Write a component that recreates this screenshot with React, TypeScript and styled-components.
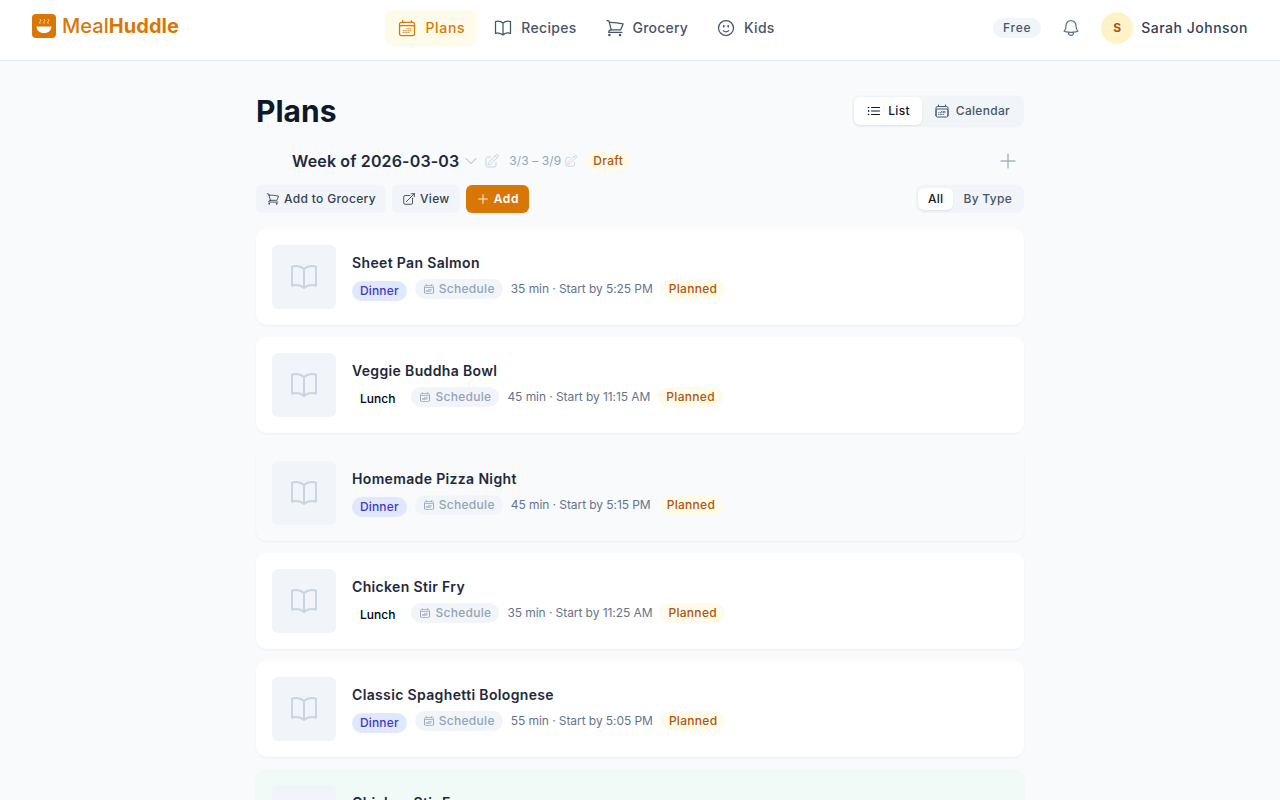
import React from "react";
import styled, { createGlobalStyle } from "styled-components";
import {
  HiOutlineArrowTopRightOnSquare,
  HiOutlineBell,
  HiOutlineBookOpen,
  HiOutlineCalendarDays,
  HiOutlineChevronDown,
  HiOutlineFaceSmile,
  HiOutlineListBullet,
  HiOutlinePencilSquare,
  HiOutlinePlus,
  HiOutlineShoppingCart,
} from "react-icons/hi2";

const GlobalStyle = createGlobalStyle`
  * { box-sizing: border-box; }
  html, body { margin: 0; padding: 0; background: #f8fafc; }
  body { font-family: Inter, "Liberation Sans", sans-serif; color: #0f172a; }
`;

const Header = styled.header`
  height: 61px;
  background: #fff;
  border-bottom: 1px solid #e2e8f0;
  padding: 0 32px;
  display: flex;
  justify-content: space-between;
  align-items: center;
`;
const Brand = styled.div`
  display: flex;
  align-items: center;
  gap: 6px;
  font-size: 20px;
  line-height: 28px;
  color: #d97706;
  font-weight: 500;
  letter-spacing: 0.05px;
  margin-top: -8px;
  b { font-weight: 700; }
`;
const Nav = styled.nav`
  display: flex;
  gap: 4px;
  margin-top: -4px;
`;
const NavItem = styled.a<{ $active?: boolean; $spacing: number }>`
  height: 36px;
  padding: 0 12px 2px;
  display: flex;
  align-items: center;
  gap: 8px;
  border-radius: 8px;
  font-size: 14px;
  font-weight: 500;
  letter-spacing: ${(p) => p.$spacing}px;
  color: ${(p) => (p.$active ? "#d97706" : "#475569")};
  background: ${(p) => (p.$active ? "#fffbeb" : "transparent")};
  svg { width: 20px; height: 20px; margin-bottom: -2px; }
`;
const Right = styled.div`
  display: flex;
  align-items: center;
  margin-top: -4px;
`;
const Free = styled.span`
  height: 20px;
  padding: 0 10px 2px;
  border-radius: 10px;
  background: #f1f5f9;
  color: #475569;
  font-size: 12px;
  font-weight: 500;
  letter-spacing: 0.75px;
  display: flex;
  align-items: center;
  margin-right: 20px;
`;
const Bell = styled(HiOutlineBell)`
  width: 20px;
  height: 20px;
  color: #64748b;
  margin-right: 20px;
`;
const Avatar = styled.span`
  width: 32px;
  height: 32px;
  padding-bottom: 2px;
  border-radius: 50%;
  background: #fef3c7;
  color: #b45309;
  font-size: 12px;
  font-weight: 700;
  display: flex;
  align-items: center;
  justify-content: center;
  margin-right: 8px;
`;
const UserName = styled.span`
  font-size: 14px;
  font-weight: 500;
  letter-spacing: 0.5px;
  padding-bottom: 2px;
  color: #334155;
`;

const Main = styled.main`
  width: 768px;
  margin: 0 auto;
  padding-top: 30px;
`;
const TitleRow = styled.div`
  display: flex;
  align-items: center;
  justify-content: space-between;
  height: 40px;
`;
const Title = styled.h1`
  margin: 0;
  font-size: 30px;
  line-height: 36px;
  font-weight: 700;
  color: #0f172a;
`;
const Segment = styled.div`
  display: flex;
  padding: 2px;
  background: #f1f5f9;
  border-radius: 8px;
`;
const SegmentButton = styled.button<{ $active?: boolean; $small?: boolean }>`
  border: 0;
  font-family: inherit;
  height: ${(p) => (p.$small ? "22px" : "28px")};
  padding: 0 ${(p) => (p.$small ? "10px" : "12px")} 2px;
  display: flex;
  align-items: center;
  gap: 6px;
  font-size: 12px;
  font-weight: 500;
  letter-spacing: 0.3px;
  border-radius: 6px;
  color: ${(p) => (p.$active ? "#0f172a" : "#475569")};
  background: ${(p) => (p.$active ? "#fff" : "transparent")};
  box-shadow: ${(p) => (p.$active ? "0 1px 2px rgba(15,23,42,.08)" : "none")};
  svg { width: 16px; height: 16px; margin-bottom: -2px; }
`;
const WeekRow = styled.div`
  display: flex;
  align-items: center;
  height: 28px;
  margin-top: 16px;
  padding-left: 36px;
`;
const WeekName = styled.span`
  font-size: 16px;
  font-weight: 600;
  letter-spacing: 0.15px;
  line-height: 28px;
  color: #1e293b;
`;
const Chevron = styled(HiOutlineChevronDown)`
  width: 16px;
  height: 16px;
  color: #a5b1c4;
  margin-left: 4px;
`;
const PencilLg = styled(HiOutlinePencilSquare)`
  width: 16px;
  height: 16px;
  color: #cbd5e1;
  margin-left: 5px;
`;
const Dates = styled.span`
  font-size: 12px;
  color: #94a3b8;
  letter-spacing: 0.1px;
  padding-bottom: 2px;
  margin-left: 9px;
`;
const PencilSm = styled(HiOutlinePencilSquare)`
  width: 14px;
  height: 14px;
  color: #cbd5e1;
  margin-left: 3px;
`;
const StatusPill = styled.span`
  height: 20px;
  padding: 0 8px 2px;
  border-radius: 10px;
  background: #fffbeb;
  color: #b45309;
  font-size: 12px;
  font-weight: 500;
  letter-spacing: 0.3px;
  display: inline-flex;
  align-items: center;
`;
const DraftPill = styled(StatusPill)`
  margin-left: 7px;
`;
const AddWeek = styled(HiOutlinePlus)`
  width: 22px;
  height: 22px;
  color: #a5b1c4;
  margin-left: auto;
  margin-right: 5px;
`;
const Toolbar = styled.div`
  display: flex;
  align-items: center;
  height: 28px;
  margin-top: 10px;
  gap: 6px;
`;
const ToolButton = styled.button<{ $primary?: boolean }>`
  border: 0;
  font-family: inherit;
  height: 28px;
  padding: 0 10px 2px;
  display: flex;
  align-items: center;
  gap: 4px;
  font-size: 12px;
  font-weight: ${(p) => (p.$primary ? 600 : 500)};
  letter-spacing: ${(p) => (p.$primary ? 0.6 : 0.34)}px;
  border-radius: 6px;
  color: ${(p) => (p.$primary ? "#fff" : "#334155")};
  background: ${(p) => (p.$primary ? "#d97706" : "#f1f5f9")};
  svg { width: 14px; height: 14px; margin-bottom: -2px; }
`;
const TypeSwitch = styled(Segment)`
  margin-left: auto;
  padding: 3px 2px;
  height: 28px;
  align-items: center;
`;
const CardList = styled.div`
  display: flex;
  flex-direction: column;
  gap: 12px;
  margin-top: 16px;
  padding-bottom: 24px;
`;
const Card = styled.article<{ $tone?: string }>`
  height: 96px;
  padding: 16px;
  display: flex;
  gap: 16px;
  border-radius: 10px;
  background: ${(p) => p.$tone || "#fff"};
  box-shadow: 0 1px 2px rgba(15, 23, 42, 0.05);
`;
const Thumb = styled.div`
  width: 64px;
  height: 64px;
  flex: none;
  border-radius: 6px;
  background: #f1f5f9;
  color: #cbd5e1;
  display: flex;
  align-items: center;
  justify-content: center;
  svg { width: 32px; height: 32px; }
`;
const CardBody = styled.div`
  display: flex;
  flex-direction: column;
  padding-top: 8px;
`;
const CardTitle = styled.div`
  font-size: 14px;
  line-height: 20px;
  font-weight: 600;
  letter-spacing: 0.35px;
  color: #1e293b;
`;
const Meta = styled.div`
  display: flex;
  align-items: center;
  gap: 8px;
  margin-top: 4px;
  height: 24px;
`;
const MealTag = styled.span<{ $dinner?: boolean }>`
  height: 20px;
  padding: 0 8px 2px;
  margin-top: 4px;
  border-radius: 10px;
  display: flex;
  align-items: center;
  font-size: 12px;
  font-weight: 500;
  letter-spacing: ${(p) => (p.$dinner ? 0.15 : 0)}px;
  color: ${(p) => (p.$dinner ? "#4338ca" : "#000")};
  background: ${(p) => (p.$dinner ? "#e0e7ff" : "transparent")};
`;
const ScheduleTag = styled.span`
  height: 20px;
  padding: 0 8px 2px;
  border-radius: 10px;
  display: flex;
  align-items: center;
  gap: 4px;
  background: #f1f5f9;
  color: #94a3b8;
  font-size: 12px;
  font-weight: 500;
  letter-spacing: 0.3px;
  svg { width: 12px; height: 12px; margin-bottom: -2px; }
`;
const Timing = styled.span`
  font-size: 12px;
  letter-spacing: -0.07px;
  padding-bottom: 2px;
  color: #64748b;
`;

const meals = [
  { name: "Sheet Pan Salmon", type: "Dinner", info: "35 min · Start by 5:25 PM" },
  { name: "Veggie Buddha Bowl", type: "Lunch", info: "45 min · Start by 11:15 AM" },
  { name: "Homemade Pizza Night", type: "Dinner", info: "45 min · Start by 5:15 PM", tone: "#f8fafc" },
  { name: "Chicken Stir Fry", type: "Lunch", info: "35 min · Start by 11:25 AM" },
  { name: "Classic Spaghetti Bolognese", type: "Dinner", info: "55 min · Start by 5:05 PM" },
  { name: "Chicken Stir Fry", type: "Dinner", info: "35 min · Start by 5:25 PM", tone: "#f0fbf7" },
];

function BowlLogo() {
  return (
    <svg width="24" height="24" viewBox="0 0 24 24">
      <rect width="24" height="24" rx="4" fill="#d97706" />
      <path d="M4.500 12.500h15c0 3.800-3 6.500-7.500 6.500s-7.500-2.700-7.500-6.500z" fill="#fff" />
      <path
        d="M7.800 5c1.200 1 1.200 2 .4 2.600-.7.600-.6 1.400.2 2.200M11.800 5c1.200 1 1.200 2 .4 2.600-.7.600-.6 1.400.2 2.200M15.800 5c1.200 1 1.200 2 .4 2.600-.7.600-.6 1.400.2 2.200"
        fill="none"
        stroke="#fde6c4"
        strokeWidth="0.9"
      />
    </svg>
  );
}

export default function App() {
  return (
    <>
      <GlobalStyle />
      <Header>
        <Brand>
          <BowlLogo />
          <span>
            Meal<b>Huddle</b>
          </span>
        </Brand>
        <Nav>
          <NavItem $active $spacing={0.7}>
            <HiOutlineCalendarDays />
            Plans
          </NavItem>
          <NavItem $spacing={0.3}>
            <HiOutlineBookOpen />
            Recipes
          </NavItem>
          <NavItem $spacing={0.2}>
            <HiOutlineShoppingCart />
            Grocery
          </NavItem>
          <NavItem $spacing={0.25}>
            <HiOutlineFaceSmile />
            Kids
          </NavItem>
        </Nav>
        <Right>
          <Free>Free</Free>
          <Bell />
          <Avatar>S</Avatar>
          <UserName>Sarah Johnson</UserName>
        </Right>
      </Header>
      <Main>
        <TitleRow>
          <Title>Plans</Title>
          <Segment>
            <SegmentButton $active>
              <HiOutlineListBullet />
              List
            </SegmentButton>
            <SegmentButton>
              <HiOutlineCalendarDays />
              Calendar
            </SegmentButton>
          </Segment>
        </TitleRow>
        <WeekRow>
          <WeekName>Week of 2026-03-03</WeekName>
          <Chevron />
          <PencilLg />
          <Dates>3/3 – 3/9</Dates>
          <PencilSm />
          <DraftPill>Draft</DraftPill>
          <AddWeek />
        </WeekRow>
        <Toolbar>
          <ToolButton>
            <HiOutlineShoppingCart />
            Add to Grocery
          </ToolButton>
          <ToolButton>
            <HiOutlineArrowTopRightOnSquare />
            View
          </ToolButton>
          <ToolButton $primary>
            <HiOutlinePlus />
            Add
          </ToolButton>
          <TypeSwitch>
            <SegmentButton $active $small>
              All
            </SegmentButton>
            <SegmentButton $small>By Type</SegmentButton>
          </TypeSwitch>
        </Toolbar>
        <CardList>
          {meals.map((m, i) => (
            <Card key={i} $tone={m.tone}>
              <Thumb>
                <HiOutlineBookOpen />
              </Thumb>
              <CardBody>
                <CardTitle>{m.name}</CardTitle>
                <Meta>
                  <MealTag $dinner={m.type === "Dinner"}>{m.type}</MealTag>
                  <ScheduleTag>
                    <HiOutlineCalendarDays />
                    Schedule
                  </ScheduleTag>
                  <Timing>{m.info}</Timing>
                  <StatusPill>Planned</StatusPill>
                </Meta>
              </CardBody>
            </Card>
          ))}
        </CardList>
      </Main>
    </>
  );
}
